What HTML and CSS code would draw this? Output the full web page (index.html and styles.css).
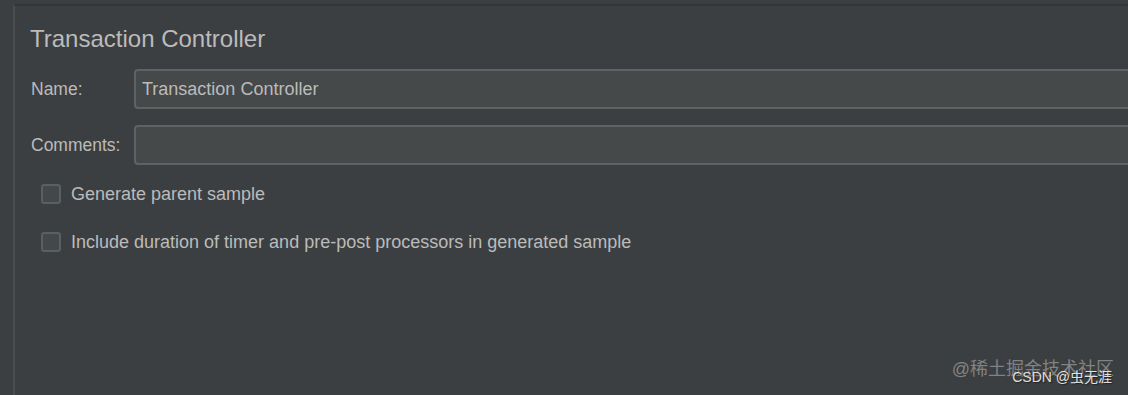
FILE: index.html
```html
<!DOCTYPE html>
<html>
  <head>
    <meta charset="UTF-8" />
    <link rel="stylesheet" href="styles.css">
  </head>
  <body>
    <div class="frame">
      <div class="panel">
        <h2 class="title">Transaction Controller</h2>
        <div class="field-row">
          <label class="field-label" for="name">Name:</label>
          <input id="name" class="field-input" type="text" value="Transaction Controller" autocomplete="off" />
        </div>
        <div class="field-row">
          <label class="field-label" for="comments">Comments:</label>
          <input id="comments" class="field-input" type="text" autocomplete="off" />
        </div>
        <div class="checks">
          <label class="check-row">
            <span class="check-box"></span>
            Generate parent sample
          </label>
          <label class="check-row">
            <span class="check-box"></span>
            Include duration of timer and pre-post processors in generated sample
          </label>
        </div>
      </div>
    </div>
    <div class="watermark">
      <span class="wm-juejin">@稀土掘金技术社区</span>
      <span class="wm-csdn">CSDN @虫无涯</span>
    </div>
  </body>
</html>
```

FILE: styles.css
```css
html,
body {
  margin: 0;
  height: 100%;
  background: #3c3f41;
  overflow: hidden;
}
body {
  font-family: 'Liberation Sans', Arial, 'Noto Sans CJK SC', sans-serif;
  color: #bbbbbb;
}
.frame {
  height: 100%;
  padding-left: 13px;
  box-sizing: border-box;
}
.panel {
  height: 100%;
  margin-top: 4px;
  border-top: 2px solid #333536;
  border-left: 2px solid #4a4d4f;
  padding: 18px 0 0 16px;
  box-sizing: border-box;
}
.title {
  margin: 0 0 15px -1px;
  font-size: 24px;
  font-weight: normal;
  line-height: 30px;
  color: #bbbbbb;
}
.field-row {
  display: flex;
  align-items: center;
  margin-bottom: 16px;
}
.field-label {
  width: 103px;
  font-size: 17.5px;
}
.field-input {
  flex: 1;
  height: 40px;
  margin-right: -6px;
  padding: 0 6px;
  box-sizing: border-box;
  background: #45494a;
  border: 2px solid #5e6264;
  border-radius: 4px;
  color: #bbbbbb;
  font-family: inherit;
  font-size: 18px;
  outline: none;
}
.checks {
  padding-top: 3px;
}
.check-row {
  display: flex;
  align-items: center;
  gap: 10px;
  margin: 0 0 28px 10px;
  font-size: 18px;
  line-height: 20px;
}
.check-box {
  width: 16px;
  height: 16px;
  border: 2px solid #5b5f61;
  border-radius: 3px;
  background: #43494a;
}
.watermark {
  position: absolute;
  right: 14px;
  bottom: 12px;
  width: 170px;
  height: 30px;
}
.wm-juejin {
  position: absolute;
  right: 0;
  top: 1px;
  font-size: 18px;
  color: rgba(190, 190, 190, 0.55);
  white-space: nowrap;
}
.wm-csdn {
  position: absolute;
  right: 2px;
  top: 13px;
  font-size: 14px;
  color: #e0e0e0;
  text-shadow: 1px 1px 1px #222;
  white-space: nowrap;
}
```
